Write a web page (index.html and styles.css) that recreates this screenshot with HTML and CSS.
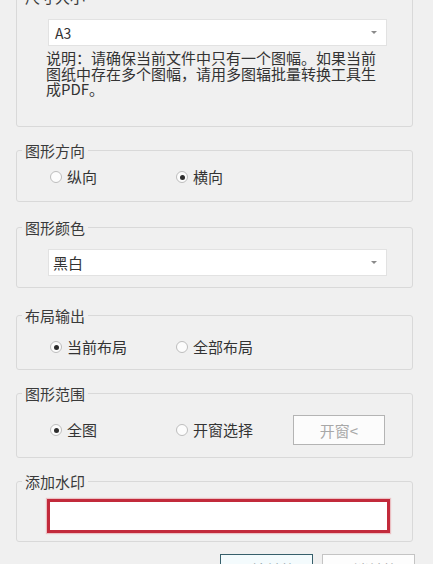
FILE: index.html
```html
<!DOCTYPE html>
<html lang="zh-CN">
<head>
<meta charset="utf-8">
<title>打印设置</title>
<link rel="stylesheet" href="styles.css">
</head>
<body>
<div class="panel">
  <section class="group g1">
    <div class="group-title">尺寸大小</div>
    <div class="combo combo-a3"><span class="combo-text">A3</span><span class="arrow"></span></div>
    <p class="desc">说明：请确保当前文件中只有一个图幅。如果当前图纸中存在多个图幅，请用多图辐批量转换工具生成PDF。</p>
  </section>

  <section class="group g2">
    <div class="group-title">图形方向</div>
    <div class="radio-row">
      <label class="radio"><span class="dot"></span>纵向</label>
      <label class="radio checked"><span class="dot"></span>横向</label>
    </div>
  </section>

  <section class="group g3">
    <div class="group-title">图形颜色</div>
    <div class="combo combo-color"><span class="combo-text">黑白</span><span class="arrow"></span></div>
  </section>

  <section class="group g4">
    <div class="group-title">布局输出</div>
    <div class="radio-row">
      <label class="radio checked"><span class="dot"></span>当前布局</label>
      <label class="radio"><span class="dot"></span>全部布局</label>
    </div>
  </section>

  <section class="group g5">
    <div class="group-title">图形范围</div>
    <div class="radio-row range-row">
      <label class="radio checked"><span class="dot"></span>全图</label>
      <label class="radio"><span class="dot"></span>开窗选择</label>
      <button class="btn-window" type="button">开窗&lt;</button>
    </div>
  </section>

  <section class="group g6">
    <div class="group-title">添加水印</div>
    <div class="watermark"></div>
  </section>

  <div class="actions">
    <button class="btn btn-primary" type="button">开始转换</button>
    <button class="btn" type="button">取消转换</button>
  </div>
</div>
</body>
</html>
```

FILE: styles.css
```css
html, body {
  margin: 0;
  padding: 0;
  background: #f0f0f0;
  overflow: hidden;
}

body {
  font-family: "Noto Sans CJK SC", "Noto Sans", sans-serif;
  color: #333;
}

.panel {
  display: flex;
  flex-direction: column;
}

.group {
  border: 1px solid #d9d9d9;
  border-radius: 3px;
  margin-left: 16px;
  margin-right: 20px;
}

.group-title {
  width: fit-content;
  margin: -10px 0 0 5px;
  padding: 0 3px;
  background: #f0f0f0;
  font-size: 15px;
  line-height: 19px;
  color: #3a3a3a;
}

.g1 { margin-top: -4px; padding-bottom: 29.5px; }
.g2 { margin-top: 23px; padding-bottom: 14px; }
.g3 { margin-top: 25px; padding-bottom: 11px; }
.g4 { margin-top: 27px; padding-bottom: 12px; }
.g5 { margin-top: 23px; padding-bottom: 12px; }
.g6 { margin-top: 23px; padding-bottom: 8px; }

.combo {
  display: flex;
  align-items: center;
  justify-content: space-between;
  box-sizing: border-box;
  width: 339px;
  height: 27px;
  margin-left: 31px;
  background: #fff;
  border: 1px solid #e2e2e2;
  padding: 0 9px 0 6px;
  font-size: 14px;
  color: #333;
}

.combo-a3 { margin-top: 13px; }
.combo-color { margin-top: 12px; padding-left: 4px; font-size: 15px; }

.arrow {
  width: 0;
  height: 0;
  border-left: 3px solid transparent;
  border-right: 3px solid transparent;
  border-top: 3px solid #8a8a8a;
}

.desc {
  width: 340px;
  margin: 4px 0 0 29px;
  font-size: 15px;
  line-height: 15.5px;
  color: #333;
}

.radio-row {
  display: grid;
  grid-template-columns: 126px 117px 92px;
  align-items: center;
  margin: 7px 0 0 33px;
  height: 20px;
}

.g4 .radio-row { margin-top: 12px; }

.range-row {
  margin-top: 12px;
  height: 30px;
}

.radio {
  display: flex;
  align-items: center;
  gap: 5px;
  font-size: 15px;
  line-height: 20px;
  color: #333;
}

.dot {
  box-sizing: border-box;
  width: 12px;
  height: 12px;
  border-radius: 50%;
  border: 1px solid #bdbdbd;
  background: #fcfcfc;
  display: flex;
  align-items: center;
  justify-content: center;
}

.radio.checked .dot::after {
  content: "";
  width: 5px;
  height: 5px;
  border-radius: 50%;
  background: #2e2e2e;
}

.btn-window {
  box-sizing: border-box;
  width: 92px;
  height: 30px;
  border: 1px solid #b4b4b4;
  background: #fcfcfc;
  color: #a8a8a8;
  font-family: inherit;
  font-size: 15px;
  padding: 0;
}

.watermark {
  box-sizing: border-box;
  width: 343px;
  height: 34px;
  margin: 8px 0 0 30px;
  background: #fff;
  border: 3px solid #c22a3b;
  box-shadow: 0 0 1px 1px rgba(228, 130, 140, 0.45);
}

.actions {
  display: flex;
  justify-content: flex-end;
  gap: 9px;
  margin-top: 12px;
  padding-right: 18px;
}

.btn {
  box-sizing: border-box;
  width: 93px;
  height: 30px;
  border: 1px solid #c4c4c4;
  background: #fdfdfd;
  color: #9a9a9a;
  font-family: inherit;
  font-size: 15px;
  padding: 0;
}

.btn-primary {
  border-color: #365f6b;
  background: #f4fbfd;
  color: #8a9aa0;
}
```
